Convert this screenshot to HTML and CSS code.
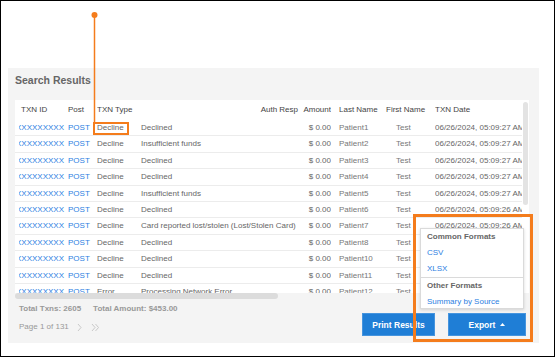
FILE: index.html
```html
<!DOCTYPE html>
<html>
<head>
<meta charset="utf-8">
<link rel="stylesheet" href="styles.css">
</head>
<body>
<div class="frame">
  <div class="panel">
    <h2 class="title">Search Results</h2>
    <div class="card">
      <div class="scroll">
        <div class="row head">
          <span class="c1h">TXN ID</span><span>Post</span><span>TXN Type</span><span class="auth">Auth Resp</span><span class="num">Amount</span><span class="ln">Last Name</span><span>First Name</span><span>TXN Date</span>
        </div>
        <div class="row"><span class="id">XXXXXXXXX</span><span class="post">POST</span><span>Decline</span><span>Declined</span><span class="num">$ 0.00</span><span class="ln">Patient1</span><span class="fn">Test</span><span>06/26/2024, 05:09:27 AM</span></div>
        <div class="row"><span class="id">XXXXXXXXX</span><span class="post">POST</span><span>Decline</span><span>Insufficient funds</span><span class="num">$ 0.00</span><span class="ln">Patient2</span><span class="fn">Test</span><span>06/26/2024, 05:09:27 AM</span></div>
        <div class="row"><span class="id">XXXXXXXXX</span><span class="post">POST</span><span>Decline</span><span>Declined</span><span class="num">$ 0.00</span><span class="ln">Patient3</span><span class="fn">Test</span><span>06/26/2024, 05:09:27 AM</span></div>
        <div class="row"><span class="id">XXXXXXXXX</span><span class="post">POST</span><span>Decline</span><span>Declined</span><span class="num">$ 0.00</span><span class="ln">Patient4</span><span class="fn">Test</span><span>06/26/2024, 05:09:27 AM</span></div>
        <div class="row"><span class="id">XXXXXXXXX</span><span class="post">POST</span><span>Decline</span><span>Insufficient funds</span><span class="num">$ 0.00</span><span class="ln">Patient5</span><span class="fn">Test</span><span>06/26/2024, 05:09:27 AM</span></div>
        <div class="row"><span class="id">XXXXXXXXX</span><span class="post">POST</span><span>Decline</span><span>Declined</span><span class="num">$ 0.00</span><span class="ln">Patient6</span><span class="fn">Test</span><span>06/26/2024, 05:09:26 AM</span></div>
        <div class="row"><span class="id">XXXXXXXXX</span><span class="post">POST</span><span>Decline</span><span>Card reported lost/stolen (Lost/Stolen Card)</span><span class="num">$ 0.00</span><span class="ln">Patient7</span><span class="fn">Test</span><span>06/26/2024, 05:09:26 AM</span></div>
        <div class="row"><span class="id">XXXXXXXXX</span><span class="post">POST</span><span>Decline</span><span>Declined</span><span class="num">$ 0.00</span><span class="ln">Patient8</span><span class="fn">Test</span><span>06/26/2024, 05:09:26 AM</span></div>
        <div class="row"><span class="id">XXXXXXXXX</span><span class="post">POST</span><span>Decline</span><span>Declined</span><span class="num">$ 0.00</span><span class="ln">Patient10</span><span class="fn">Test</span><span>06/26/2024, 05:09:26 AM</span></div>
        <div class="row"><span class="id">XXXXXXXXX</span><span class="post">POST</span><span>Decline</span><span>Declined</span><span class="num">$ 0.00</span><span class="ln">Patient11</span><span class="fn">Test</span><span>06/26/2024, 05:09:26 AM</span></div>
        <div class="row"><span class="id">XXXXXXXXX</span><span class="post">POST</span><span>Error</span><span>Processing Network Error</span><span class="num">$ 0.00</span><span class="ln">Patient12</span><span class="fn">Test</span><span>06/26/2024, 05:09:26 AM</span></div>
      </div>
      <div class="vthumb"></div>
    </div>
    <div class="htrack"><div class="hthumb"></div></div>
    <div class="footer">
      <div class="info">
        <div class="totals"><span>Total Txns: 2605</span><span class="amt">Total Amount: $453.00</span></div>
        <div class="pager"><span>Page 1 of 131</span>
          <svg class="chev" width="5" height="9" viewBox="0 0 5 9"><path d="M1 1 L4 4.5 L1 8" fill="none" stroke="#c4c4c4" stroke-width="0.9"/></svg>
          <svg class="chev2" width="9" height="9" viewBox="0 0 9 9"><path d="M1 1 L4 4.5 L1 8 M4.5 1 L7.5 4.5 L4.5 8" fill="none" stroke="#c4c4c4" stroke-width="0.9"/></svg>
        </div>
      </div>
      <div class="buttons">
        <button class="btn print">Print Results</button>
        <button class="btn export">Export <svg class="caret" width="5" height="3" viewBox="0 0 5 3"><path d="M0 3 L2.5 0 L5 3 Z" fill="#fff"/></svg></button>
      </div>
    </div>
  </div>

  <div class="menu">
    <div class="mhead">Common Formats</div>
    <div class="mitem">CSV</div>
    <div class="mitem">XLSX</div>
    <div class="mhead sep">Other Formats</div>
    <div class="mitem">Summary by Source</div>
  </div>

  <svg class="annot" width="555" height="357" viewBox="0 0 555 357">
    <circle cx="93.5" cy="14" r="3" fill="#f47c1c"/>
    <line x1="93.5" y1="14" x2="93.5" y2="121" stroke="#f47c1c" stroke-width="1.5"/>
    <rect x="93" y="122" width="34" height="11" fill="none" stroke="#f47c1c" stroke-width="2"/>
    <rect x="413.5" y="214.5" width="117" height="125" fill="none" stroke="#f47c1c" stroke-width="3"/>
  </svg>
</div>
</body>
</html>
```
FILE: styles.css
```css
html, body {
  margin: 0;
  background: #fff;
}
body {
  font-family: "Liberation Sans", Arial, sans-serif;
}
.frame {
  position: relative;
  width: 555px;
  height: 357px;
  border: 1px solid #000;
  box-sizing: border-box;
  padding: 67px 0 0 7px;
  background: #fff;
}
.panel {
  width: 531px;
  height: 275px;
  background: #f4f4f4;
  padding: 6px 10px 0 7px;
  box-sizing: border-box;
}
.title {
  margin: 0 0 13px;
  font-size: 10.5px;
  line-height: 13px;
  font-weight: bold;
  color: #666;
}
.card {
  position: relative;
  width: 514px;
  background: #fff;
}
.scroll {
  width: 507px;
  height: 193px;
  overflow: hidden;
}
.row {
  display: grid;
  grid-template-columns: 49px 29px 44px 160px 30px 55px 49px 140px;
  padding-left: 4px;
  height: 16.4px;
  line-height: 16.4px;
  box-sizing: border-box;
  border-bottom: 1px solid #ececec;
  font-size: 8px;
  color: #666;
  white-space: nowrap;
}
.row > span {
  overflow: hidden;
}
.head {
  height: 20px;
  line-height: 20px;
  color: #444;
  border-bottom: none;
}
.c1h {
  padding-left: 2px;
}
.auth {
  text-align: right;
  padding-right: 3px;
}
.num {
  text-align: right;
}
.ln {
  padding-left: 8px;
  color: #777;
}
.head .ln {
  color: #444;
}
.fn {
  padding-left: 10px;
  color: #777;
}
.id {
  color: #2c80e2;
  text-indent: -3px;
}
.post {
  color: #2c80e2;
}
.vthumb {
  position: absolute;
  left: 508px;
  top: 2px;
  width: 5px;
  height: 103px;
  border-radius: 3px;
  background: #e3e3e3;
}
.htrack {
  height: 6px;
}
.hthumb {
  width: 263px;
  height: 6px;
  border-radius: 3px;
  background: #dcdcdc;
}
.footer {
  display: flex;
  justify-content: space-between;
  padding-top: 4px;
}
.info {
  padding-left: 4px;
  font-size: 8px;
  color: #999;
}
.totals {
  line-height: 12px;
  font-weight: bold;
}
.amt {
  margin-left: 12px;
}
.pager {
  margin-top: 6px;
  line-height: 12px;
  display: flex;
  align-items: center;
}
.chev {
  margin-left: 8px;
}
.chev2 {
  margin-left: 9px;
}
.buttons {
  display: flex;
  gap: 13px;
  margin-top: 10px;
  margin-right: 3px;
}
.btn {
  height: 23px;
  border: 1px solid #4594de;
  background: #1f7ed6;
  color: #fff;
  font-family: "Liberation Sans", Arial, sans-serif;
  font-size: 8.5px;
  font-weight: bold;
  padding: 0;
  display: flex;
  align-items: center;
  justify-content: center;
}
.print {
  width: 73px;
}
.export {
  width: 78px;
}
.caret {
  margin-left: 5px;
}
.menu {
  position: absolute;
  left: 419px;
  top: 227px;
  width: 104px;
  height: 81px;
  box-sizing: border-box;
  background: #fff;
  border: 1px solid #dadada;
  box-shadow: 0 1px 3px rgba(0, 0, 0, 0.15);
  font-size: 8px;
}
.mhead, .mitem {
  height: 16px;
  line-height: 16px;
  padding: 0 6px;
  white-space: nowrap;
}
.mhead {
  color: #666;
  font-weight: bold;
}
.mitem {
  color: #2c80e2;
}
.sep {
  border-top: 1px solid #dadada;
}
.annot {
  position: absolute;
  left: 0;
  top: 0;
  pointer-events: none;
}
```
